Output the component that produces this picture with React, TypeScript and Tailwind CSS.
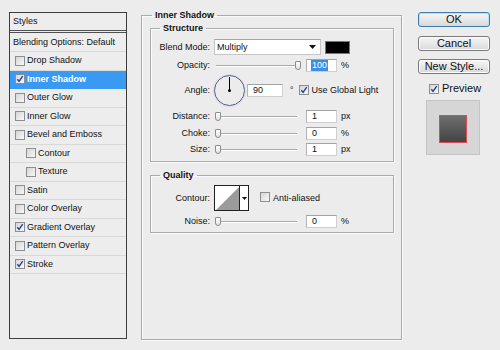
import { ReactNode } from "react";
import clsx from "clsx";

const styleRows = [
  { label: "Drop Shadow" },
  { label: "Inner Shadow", on: true, active: true },
  { label: "Outer Glow" },
  { label: "Inner Glow" },
  { label: "Bevel and Emboss" },
  { label: "Contour", indent: true },
  { label: "Texture", indent: true },
  { label: "Satin" },
  { label: "Color Overlay" },
  { label: "Gradient Overlay", on: true },
  { label: "Pattern Overlay" },
  { label: "Stroke", on: true },
];

const Check = ({ on }: { on?: boolean }) => (
  <span className="inline-flex h-[10px] w-[10px] shrink-0 items-center justify-center border border-[#8e8e8e] bg-linear-to-br from-[#d6d6d6] to-[#f8f8f8]">
    {on && (
      <svg width="8" height="8" viewBox="0 0 8 8">
        <path d="M1.3 4.2 L3.1 6.3 L6.7 1.2" fill="none" stroke="#23409a" strokeWidth="1.4" />
      </svg>
    )}
  </span>
);

const Field = ({ value, className }: { value: string; className?: string }) => (
  <span
    className={clsx(
      "flex h-[13px] items-center border border-[#cfcfcf] border-t-[#a3a3a3] border-l-[#b3b3b3] bg-white pl-[5px] text-[9px]",
      className
    )}
  >
    {value}
  </span>
);

const Slider = ({ pos }: { pos: "start" | "end" }) => (
  <span className="relative ml-[6px] h-[13px] w-[85px]">
    <span className="absolute left-0 top-[6px] h-[2px] w-[81px] border-t border-b border-t-[#a9a9a9] border-b-white" />
    <span
      className={clsx(
        "absolute top-[2px] h-[9px] w-[6px] rounded-b-[3px] rounded-t-[1px] border border-[#8c8c8c] bg-linear-to-b from-white to-[#e2e2e2]",
        pos === "end" ? "left-[79px]" : "left-[-1px]"
      )}
    />
  </span>
);

const Row = ({
  label,
  children,
  className,
}: {
  label: string;
  children: ReactNode;
  className?: string;
}) => (
  <div className={clsx("flex items-center", className)}>
    <span className="w-[59px] shrink-0 text-right">{label}</span>
    {children}
  </div>
);

const Group = ({
  title,
  children,
  className,
}: {
  title: string;
  children: ReactNode;
  className?: string;
}) => (
  <fieldset
    className={clsx(
      "border border-[#ababab] shadow-[inset_1px_1px_0_#fafafa,1px_1px_0_#fafafa]",
      className
    )}
  >
    <legend className="ml-[9px] px-[3px] text-[9px] font-bold leading-[11px]">{title}</legend>
    {children}
  </fieldset>
);

const Button = ({ label, primary, className }: { label: string; primary?: boolean; className?: string }) => (
  <button
    className={clsx(
      "flex h-[15px] w-[72px] items-center justify-center rounded-[3px] border bg-linear-to-b from-[#f6f6f6] to-[#d9d9d9] text-[11px] leading-none text-[#111]",
      primary
        ? "border-[#3f7eb0] shadow-[inset_0_0_0_1px_#aee4f8]"
        : "border-[#7a7a7a] shadow-[inset_0_0_0_1px_#fbfbfb]",
      className
    )}
  >
    {label}
  </button>
);

export default function App() {
  return (
    <div className="flex h-[350px] w-[500px] overflow-hidden bg-[#ececec] font-['Liberation_Sans',Arial,sans-serif] text-[9px] leading-[11px] text-[#111]">
      {/* styles list */}
      <div className="ml-[9px] mt-[12px] flex h-[327px] w-[118px] shrink-0 flex-col border border-[#3d3d3d] bg-[#ededed]">
        <div className="flex h-[20px] items-center border-b-[3px] border-double border-[#505050] pl-[3px]">
          Styles
        </div>
        <div className="flex h-[19px] items-center border-b border-[#d9d9d9] pl-[3px]">
          Blending Options: Default
        </div>
        {styleRows.map((r) => (
          <div
            key={r.label}
            className={clsx(
              "flex h-[18.5px] items-center gap-[2px] border-b",
              r.indent ? "pl-[16px]" : "pl-[5px]",
              r.active
                ? "border-[#3a9af3] bg-[#3a9af3] font-bold text-white"
                : "border-[#d9d9d9]"
            )}
          >
            <Check on={r.on} />
            <span>{r.label}</span>
          </div>
        ))}
      </div>

      {/* settings */}
      <fieldset className="ml-[14px] mt-[10px] h-[330px] w-[261px] shrink-0 border border-[#ababab] pl-[8px] pr-[7px] shadow-[inset_1px_1px_0_#fafafa,1px_1px_0_#fafafa]">
        <legend className="ml-[2px] px-[3px] text-[9px] font-bold leading-[11px]">Inner Shadow</legend>

        <Group title="Structure" className="mt-[2px] pb-[5px]">
          <Row label="Blend Mode:" className="mt-[5px] h-[16px]">
            <span className="ml-[4px] flex h-[16px] w-[107px] items-center justify-between border border-[#c6c6c6] border-t-[#a6a6a6] bg-white pl-[2px] pr-[4px]">
              Multiply
              <svg width="7" height="4" viewBox="0 0 7 4">
                <polygon points="0,0 7,0 3.5,4" fill="#111" />
              </svg>
            </span>
            <span className="ml-[4px] h-[13px] w-[25px] border border-[#777] bg-black" />
          </Row>
          <Row label="Opacity:" className="mt-[4px] h-[13px]">
            <Slider pos="end" />
            <span className="ml-[5px] flex h-[13px] w-[31px] items-center border border-[#cfcfcf] border-t-[#a3a3a3] border-l-[#b3b3b3] bg-white pl-[4px]">
              <span className="bg-[#3b8ee8] px-[1px] text-white">100</span>
            </span>
            <span className="ml-[4px]">%</span>
          </Row>
          <Row label="Angle:" className="mt-[3px] h-[31px]">
            <span className="relative ml-[4px] h-[31px] w-[31px] shrink-0 rounded-full border-[1.5px] border-[#5c6186] shadow-[0_0_0_1px_#d8dbe8]">
              <span className="absolute left-[13.5px] top-[1px] h-[13px] w-[1px] bg-black" />
              <span className="absolute left-[12.5px] top-[12.5px] h-[3px] w-[3px] rounded-full bg-black" />
            </span>
            <Field value="90" className="ml-[2px] w-[36px]" />
            <span className="ml-[7px]">°</span>
            <span className="ml-[5px]">
              <Check on />
            </span>
            <span className="ml-[3px]">Use Global Light</span>
          </Row>
          <Row label="Distance:" className="mt-[4px] h-[13px]">
            <Slider pos="start" />
            <Field value="1" className="ml-[5px] w-[31px]" />
            <span className="ml-[4px]">px</span>
          </Row>
          <Row label="Choke:" className="mt-[4px] h-[13px]">
            <Slider pos="start" />
            <Field value="0" className="ml-[5px] w-[31px]" />
            <span className="ml-[4px]">%</span>
          </Row>
          <Row label="Size:" className="mt-[3px] h-[13px]">
            <Slider pos="start" />
            <Field value="1" className="ml-[5px] w-[31px]" />
            <span className="ml-[4px]">px</span>
          </Row>
        </Group>

        <Group title="Quality" className="mt-[8px] pb-[4px]">
          <Row label="Contour:" className="mt-[4px] h-[26px]">
            <span className="ml-[4px] flex h-[26px]">
              <span className="h-[26px] w-[26px] border border-[#222] bg-white">
                <svg width="24" height="24" viewBox="0 0 24 24" className="block">
                  <polygon points="1,24 24,1 24,24" fill="#9b9b9b" />
                </svg>
              </span>
              <span className="flex h-[26px] w-[9px] items-center justify-center border border-l-0 border-[#222] bg-white">
                <svg width="5" height="3" viewBox="0 0 5 3">
                  <polygon points="0,0 5,0 2.5,3" fill="#111" />
                </svg>
              </span>
            </span>
            <span className="ml-[11px]">
              <Check />
            </span>
            <span className="ml-[3px]">Anti-aliased</span>
          </Row>
          <Row label="Noise:" className="mt-[4px] h-[13px]">
            <Slider pos="start" />
            <Field value="0" className="ml-[5px] w-[31px]" />
            <span className="ml-[4px]">%</span>
          </Row>
        </Group>
      </fieldset>

      {/* buttons */}
      <div className="ml-[16px] mt-[12px] flex w-[72px] shrink-0 flex-col">
        <Button label="OK" primary />
        <Button label="Cancel" className="mt-[9px]" />
        <Button label="New Style..." className="mt-[8px]" />
        <div className="ml-[11px] mt-[9px] flex items-center gap-[3px] text-[11px] leading-[11px]">
          <Check on />
          <span>Preview</span>
        </div>
        <div className="ml-[8px] mt-[6px] h-[55px] w-[54px] border border-[#c4c4c4] bg-[#d6d6d6] pl-[12px] pt-[14px]">
          <div className="h-[28px] w-[28px] border-[1.5px] border-[#dd4a5a] bg-linear-to-b from-[#6e6e6e] to-[#444]" />
        </div>
      </div>
    </div>
  );
}
